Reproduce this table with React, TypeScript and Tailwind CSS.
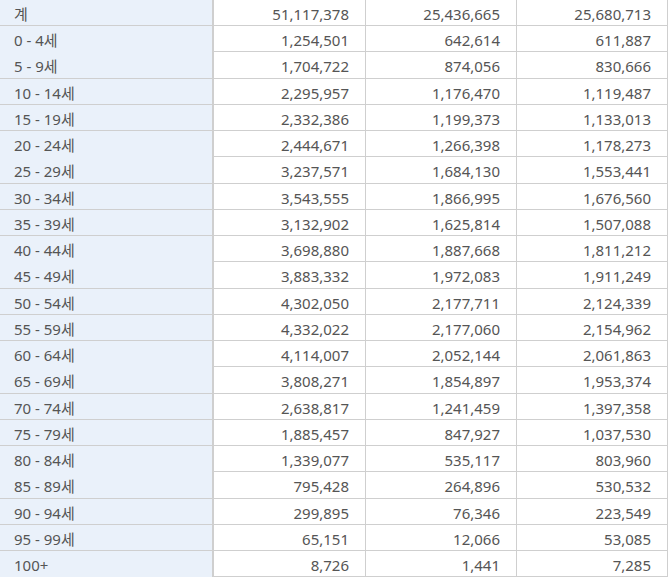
import React from "react";

type Row = [string, string, string, string];

const ROWS: Row[] = [
  ["계", "51,117,378", "25,436,665", "25,680,713"],
  ["0 - 4세", "1,254,501", "642,614", "611,887"],
  ["5 - 9세", "1,704,722", "874,056", "830,666"],
  ["10 - 14세", "2,295,957", "1,176,470", "1,119,487"],
  ["15 - 19세", "2,332,386", "1,199,373", "1,133,013"],
  ["20 - 24세", "2,444,671", "1,266,398", "1,178,273"],
  ["25 - 29세", "3,237,571", "1,684,130", "1,553,441"],
  ["30 - 34세", "3,543,555", "1,866,995", "1,676,560"],
  ["35 - 39세", "3,132,902", "1,625,814", "1,507,088"],
  ["40 - 44세", "3,698,880", "1,887,668", "1,811,212"],
  ["45 - 49세", "3,883,332", "1,972,083", "1,911,249"],
  ["50 - 54세", "4,302,050", "2,177,711", "2,124,339"],
  ["55 - 59세", "4,332,022", "2,177,060", "2,154,962"],
  ["60 - 64세", "4,114,007", "2,052,144", "2,061,863"],
  ["65 - 69세", "3,808,271", "1,854,897", "1,953,374"],
  ["70 - 74세", "2,638,817", "1,241,459", "1,397,358"],
  ["75 - 79세", "1,885,457", "847,927", "1,037,530"],
  ["80 - 84세", "1,339,077", "535,117", "803,960"],
  ["85 - 89세", "795,428", "264,896", "530,532"],
  ["90 - 94세", "299,895", "76,346", "223,549"],
  ["95 - 99세", "65,151", "12,066", "53,085"],
  ["100+", "8,726", "1,441", "7,285"],
];

export default function App() {
  return (
    <div className="h-[579px] w-[670px] overflow-hidden bg-white font-['Noto_Sans','Noto_Sans_CJK_KR',sans-serif] text-[15px] text-[#555]">
      <div className="-mt-[1.25px] w-[668px] border-b border-[#cfcfcf]">
        {ROWS.map((row, i) => (
          <div
            key={i}
            className="grid h-[26.25px] grid-cols-[214px_152px_151px_151px] border-t border-[#cfcfcf]"
          >
            <div className="flex items-center border-r-2 border-[#cfcfcf] bg-[#eaf1fa] pl-[14px] pt-[3px]">
              {row[0]}
            </div>
            {row.slice(1).map((v, j) => (
              <div
                key={j}
                className={`flex items-center justify-end pr-[16px] pt-[3px] ${
                  j < 2 ? "border-r border-[#cfcfcf]" : "border-r border-[#cfcfcf]"
                }`}
              >
                {v}
              </div>
            ))}
          </div>
        ))}
      </div>
    </div>
  );
}
